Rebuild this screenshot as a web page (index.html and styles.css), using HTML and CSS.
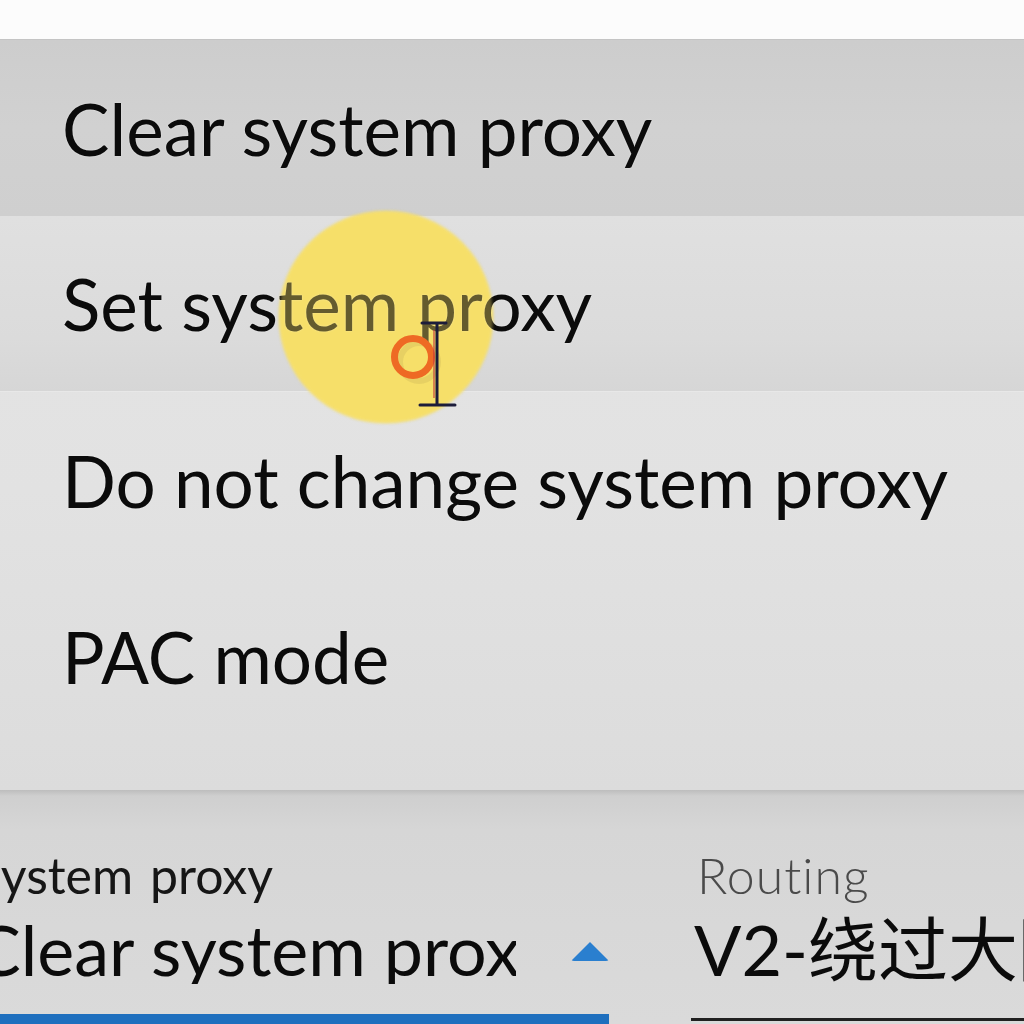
FILE: index.html
```html
<!DOCTYPE html>
<html lang="en">
<head>
<meta charset="utf-8">
<title>System proxy menu</title>
<link rel="stylesheet" href="styles.css">
</head>
<body>
<div class="screen">
  <div class="topstrip"></div>
  <div class="menu">
    <div class="item hover"><span class="txt">Clear system proxy</span></div>
    <div class="item pressed"><span class="txt">Set system proxy</span></div>
    <div class="item"><span class="txt">Do not change system proxy</span></div>
    <div class="item"><span class="txt">PAC mode</span></div>
  </div>
  <div class="panel">
    <div class="field proxy">
      <div class="label">System proxy</div>
      <div class="combo">
        <span class="value">Clear system proxy</span>
        <span class="arrow"></span>
      </div>
    </div>
    <div class="field routing">
      <div class="label light">Routing</div>
      <div class="combo dark"><span class="value">V2-绕过大陆</span></div>
    </div>
  </div>
  <div class="spot"></div>
  <div class="spot-tint"></div>
  <div class="ring-ghost"></div>
  <div class="ring"></div>
  <svg class="ibeam" width="40" height="90" viewBox="0 0 40 90">
    <path d="M16 10 L16 78" stroke="#c23a3a" stroke-width="1.6" opacity="0.7" fill="none"/>
    <path d="M4 3 L28 3 M19 3 L19 85 M2 85 L37 85" stroke="#1c1c3a" stroke-width="3" fill="none" stroke-linecap="round"/>
  </svg>
</div>
</body>
</html>
```
FILE: styles.css
```css
html, body {
  margin: 0;
  padding: 0;
}
body {
  background: #fcfcfc;
  font-family: Lato, "Noto Sans", sans-serif;
  color: #0b0b0b;
}
.screen {
  position: relative;
  width: 1024px;
  height: 1024px;
  overflow: hidden;
  background: #fcfcfc;
}
.topstrip {
  height: 40px;
  background: #fcfcfc;
}
.menu {
  display: flex;
  flex-direction: column;
  padding-bottom: 46px;
  background: linear-gradient(#e6e6e6, #e2e2e2 60%, #dcdcdc);
  border-top: 1px solid #c4c4c4;
  margin-top: -1px;
}
.item {
  height: 176px;
  display: flex;
  align-items: center;
  padding-left: 62px;
  font-size: 71px;
  line-height: 1;
}
.item .txt {
  position: relative;
  z-index: 2;
  text-shadow: 0 0 2px rgba(255,255,255,0.5);
}
.item.hover {
  background: linear-gradient(#cdcdcd, #d1d1d1 50%, #cfcfcf);
}
.item.pressed {
  background: linear-gradient(#e0e0e0, #dbdbdb 70%, #d6d6d6);
  border-bottom: 1px solid #e8e8e8;
  height: 175px;
}
.panel {
  display: flex;
  gap: 85px;
  margin-left: -26px;
  padding-top: 60px;
  height: 174px;
  background: linear-gradient(#bdbdbd 0, #cfcfcf 6px, #d6d6d6 40px, #dadada);
}
.field {
  display: flex;
  flex-direction: column;
  gap: 14px;
}
.field.proxy {
  width: 638px;
}
.field.routing {
  flex: 1;
}
.label {
  font-size: 50px;
  line-height: 1;
  color: #161616;
  margin-left: 1px;
  word-spacing: 4px;
}
.label.light {
  color: #4a4a4a;
  font-weight: 300;
  margin-left: 3px;
  letter-spacing: 1px;
}
.combo {
  display: flex;
  align-items: flex-start;
  font-size: 70px;
  line-height: 1;
  padding-bottom: 30px;
  border-bottom: 10px solid #1e6fbe;
}
.combo.dark {
  border-bottom: 3px solid #202020;
  padding-bottom: 34px;
  margin-left: -3px;
  padding-left: 3px;
}
.combo .value {
  white-space: nowrap;
  overflow: hidden;
  font-family: Lato, "Noto Sans CJK SC", sans-serif;
}
.proxy .combo .value {
  width: 542px;
}
.arrow {
  width: 0;
  height: 0;
  margin-left: 55px;
  margin-top: 28px;
  border-left: 19px solid transparent;
  border-right: 19px solid transparent;
  border-bottom: 19px solid #2a7fcf;
  border-radius: 3px;
}
.spot {
  position: absolute;
  left: 279px;
  top: 211px;
  width: 214px;
  height: 212px;
  border-radius: 50%;
  background: #f6df6a;
  filter: blur(1.5px);
  z-index: 1;
}
.spot-tint {
  position: absolute;
  left: 279px;
  top: 211px;
  width: 214px;
  height: 212px;
  border-radius: 50%;
  background: rgba(246, 223, 106, 0.38);
  filter: blur(1.5px);
  z-index: 3;
}
.ring-ghost {
  position: absolute;
  left: 397px;
  top: 340px;
  width: 44px;
  height: 44px;
  box-sizing: border-box;
  border-radius: 50%;
  border: 6px solid rgba(120, 110, 60, 0.12);
  z-index: 4;
}
.ring {
  position: absolute;
  left: 391px;
  top: 335px;
  width: 44px;
  height: 44px;
  box-sizing: border-box;
  border-radius: 50%;
  border: 7px solid #ee6a24;
  z-index: 5;
}
.ibeam {
  position: absolute;
  left: 418px;
  top: 320px;
  z-index: 6;
}
```
